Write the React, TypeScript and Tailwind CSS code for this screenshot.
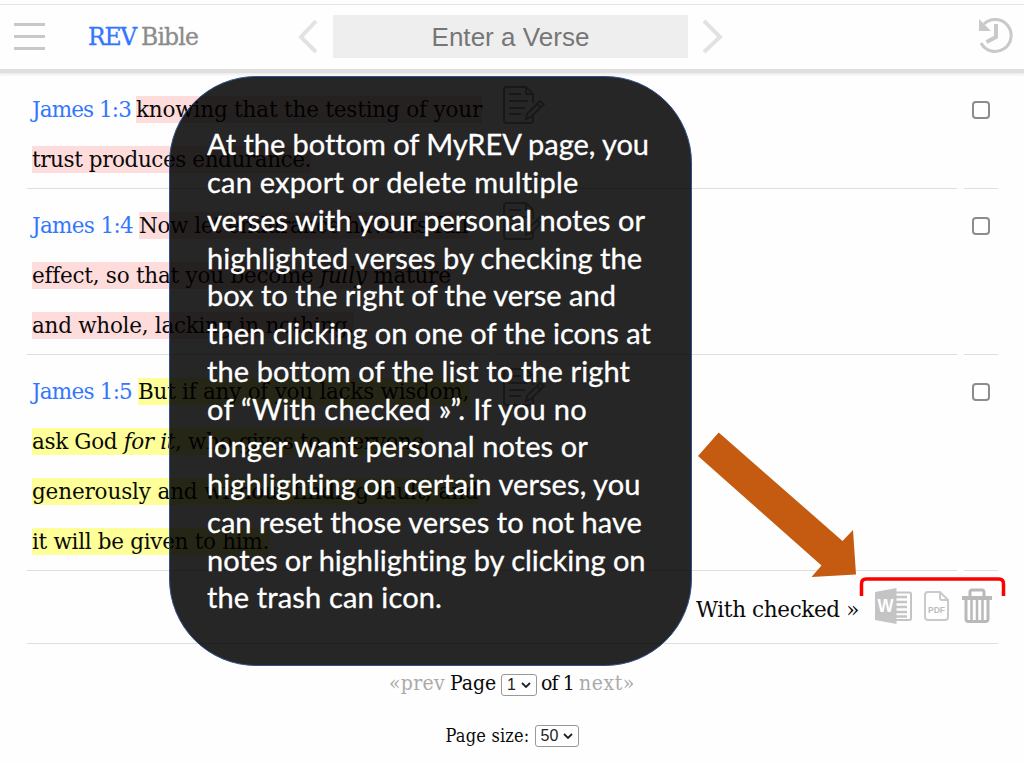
import { useLayoutEffect, useRef, type ReactNode } from "react";

/** Inline text whose tracking is adjusted so that it fills the given width. */
function Fit({ w, className = "", children }: { w: number; className?: string; children: ReactNode }) {
  const ref = useRef<HTMLSpanElement>(null);
  useLayoutEffect(() => {
    const el = ref.current;
    if (!el) return;
    el.style.letterSpacing = "0px";
    const natural = el.getBoundingClientRect().width;
    const count = (el.textContent || "").length;
    el.style.letterSpacing = `${(w - natural) / count}px`;
  }, [w]);
  return (
    <span ref={ref} className={`inline-block whitespace-pre ${className}`}>
      {children}
    </span>
  );
}

const pink = "bg-[#ffdcdc]";
const yellow = "bg-[#ffff99]";

type Line = { w: number; text: ReactNode };
type Verse = { reference: string; refWidth: number; gap: string; height: string; color: string; lines: Line[] };

const verses: Verse[] = [
  {
    reference: "James 1:3",
    refWidth: 99,
    gap: "w-[5px]",
    height: "h-[116px]",
    color: pink,
    lines: [
      { w: 346, text: "knowing that the testing of your" },
      { w: 279, text: "trust produces endurance." },
    ],
  },
  {
    reference: "James 1:4",
    refWidth: 101,
    gap: "w-[6px]",
    height: "h-[166px]",
    color: pink,
    lines: [
      { w: 329, text: "Now let endurance have its full" },
      { w: 418, text: <>effect, so that you become <i>fully</i> mature</> },
      { w: 322, text: "and whole, lacking in nothing." },
    ],
  },
  {
    reference: "James 1:5",
    refWidth: 100,
    gap: "w-[6px]",
    height: "h-[216px]",
    color: yellow,
    lines: [
      { w: 331, text: "But if any of you lacks wisdom," },
      { w: 392, text: <>ask God <i>for it</i>, who gives to everyone</> },
      { w: 446, text: "generously and without finding fault, and" },
      { w: 237, text: "it will be given to him." },
    ],
  },
];

const callout: [string, number][] = [
  ["At the bottom of MyREV page, you", 441],
  ["can export or delete multiple", 372],
  ["verses with your personal notes or", 438],
  ["highlighted verses by checking the", 435],
  ["box to the right of the verse and", 409],
  ["then clicking on one of the icons at", 444],
  ["the bottom of the list to the right", 422],
  ["of “With checked »”. If you no", 380],
  ["longer want personal notes or", 381],
  ["highlighting on certain verses, you", 434],
  ["can reset those verses to not have", 435],
  ["notes or highlighting by clicking on", 439],
  ["the trash can icon.", 235],
];

function NoteIcon() {
  return (
    <svg className="mt-3 ml-2 h-10 w-[44px]" viewBox="0 0 44 40" fill="none" stroke="#a0a0a0" strokeWidth="2">
      <path d="M30 29V35Q30 38 27 38H4Q1 38 1 35V5Q1 2 4 2H23L30 9V18M23 2V9H30M6 9H18M6 16H25M6 23H22M6 29H18" />
      <path d="M24 29L37 16L41 19L28 32L23 34ZM34 19L38 23" />
    </svg>
  );
}

function HistoryIcon() {
  return (
    <svg className="h-9 w-9 overflow-visible" viewBox="0 0 36 36" fill="none" stroke="#c9c9c9">
      <path d="M6 11A16 16 0 1 1 3 30" strokeWidth="3" />
      <path d="M1 6V18H13Z" fill="#c9c9c9" stroke="none" />
      <path d="M18 11V24L8.500 29" strokeWidth="4" />
    </svg>
  );
}

function WordIcon() {
  return (
    <svg className="h-9 w-[38px]" viewBox="0 0 38 36">
      <path d="M20 4.500H34.500Q36 4.500 36 6V30.500Q36 32 34.500 32H20" fill="none" stroke="#c4c4c4" strokeWidth="2" />
      <path d="M21 9H32M21 14H32M21 19H32M21 24H32M21 28.500H32" stroke="#c4c4c4" strokeWidth="2.500" />
      <path d="M0 4L21.500 0V36L0 32Z" fill="#c4c4c4" />
      <text x="10.500" y="24" textAnchor="middle" fontFamily="Liberation Sans, sans-serif" fontWeight="700" fontSize="18" fill="#fff" textLength="16" lengthAdjust="spacingAndGlyphs">W</text>
    </svg>
  );
}

function PdfIcon() {
  return (
    <svg className="h-[30px] w-[25px]" viewBox="0 0 25 30" fill="none" stroke="#cacaca" strokeWidth="2">
      <path d="M16 1H4Q1 1 1 4V26Q1 29 4 29H21Q24 29 24 26V9L16 1V7Q16 9 18 9H24" />
      <text x="12.500" y="22" textAnchor="middle" stroke="none" fill="#bdbdbd" fontFamily="Liberation Sans, sans-serif" fontWeight="700" fontSize="8.500">PDF</text>
    </svg>
  );
}

function TrashIcon() {
  return (
    <svg className="h-[36px] w-[30px]" viewBox="0 0 30 36" fill="none" stroke="#b9b9b9">
      <path d="M8 9V4Q8 2 10 2H20Q22 2 22 4V9" strokeWidth="3" />
      <path d="M0 10H30" strokeWidth="4" />
      <path d="M4 11V31Q4 33.500 6.500 33.500H23.500Q26 33.500 26 31V11" strokeWidth="3" />
      <path d="M9.500 12V33M15 12V33M20.500 12V33" strokeWidth="2.500" />
    </svg>
  );
}

function Select({ value, className }: { value: string; className: string }) {
  return (
    <span className={`flex h-[22px] items-center justify-between rounded-[3px] border border-[#999] bg-white pr-[5px] pl-[5px] font-['Liberation_Sans',sans-serif] text-[16px] leading-none text-[#222] ${className}`}>
      {value}
      <svg className="h-[6px] w-[10px]" viewBox="0 0 10 6" fill="none" stroke="#222" strokeWidth="1.800">
        <path d="M1 1L5 5L9 1" />
      </svg>
    </span>
  );
}

export default function App() {
  return (
    <div className="relative h-[764px] w-[1024px] overflow-hidden bg-[#fefefe] font-['DejaVu_Serif',serif] text-[21.500px] text-[#0a0a0a]">
      <header className="mt-1 flex h-[69px] items-start border-t border-[#e4e4e4] border-b-[4px] border-b-[#dfdfdf] pl-[14px] shadow-[0_2px_2px_#eeeeee]">
        <div className="mt-[18px] flex w-[31px] flex-col gap-[9px]">
          <div className="h-[3px] bg-[#c8c8c8]" />
          <div className="h-[3px] bg-[#c8c8c8]" />
          <div className="h-[3px] bg-[#c8c8c8]" />
        </div>
        <div className="mt-[16px] ml-[43px] flex w-[111px] gap-[5px] text-[23.500px] leading-8">
          <Fit w={48} className="text-[#3377ff] [-webkit-text-stroke:0.3px_#3377ff]">REV</Fit>
          <Fit w={57} className="text-[#8c8c8c] [-webkit-text-stroke:0.3px_#8c8c8c]">Bible</Fit>
        </div>
        <svg className="mt-[14px] ml-[99px] h-9 w-5" viewBox="0 0 20 36" fill="none" stroke="#e2e2e2" strokeWidth="4">
          <path d="M18 2L3 18L18 33" />
        </svg>
        <div className="mt-[10px] ml-[15px] flex h-[43px] w-[355px] items-center justify-center bg-[#eeeeee] pt-px font-['Liberation_Sans',sans-serif] text-[26px] text-[#767676]">
          <Fit w={158}>Enter a Verse</Fit>
        </div>
        <svg className="mt-[14px] ml-[15px] h-9 w-5" viewBox="0 0 20 36" fill="none" stroke="#e2e2e2" strokeWidth="4">
          <path d="M1 2L17 18L1 33" />
        </svg>
        <div className="mt-[8px] ml-[255px]">
          <HistoryIcon />
        </div>
      </header>

      <main className="ml-[27px] w-[971px]">
        {verses.map((v, i) => (
          <section key={v.reference} className={`grid grid-cols-[460px_462px_34px] gap-x-[7.5px] ${v.height}`}>
            <div className="border-b border-[#dedede] pt-[12px] pl-[5px]">
              {v.lines.map((line, n) => (
                <div key={n} className="flex h-[49.8px] items-center leading-[27px]">
                  {n === 0 && (
                    <>
                      <Fit w={v.refWidth} className="text-[#3377ff]">{v.reference}</Fit>
                      <span className={v.gap} />
                    </>
                  )}
                  <Fit w={line.w} className={v.color}>{line.text}</Fit>
                </div>
              ))}
            </div>
            <div className="border-b border-[#dedede]">
              <NoteIcon />
            </div>
            <div className="border-b border-[#dedede] pt-[28px] pl-[8px]">
              <div className="h-[18px] w-[18px] rounded-[4px] border-2 border-[#8c8c8c] bg-white" aria-label={`Select verse ${i + 1}`} />
            </div>
          </section>
        ))}
        <div className="flex h-[73px] items-start border-b border-[#dedede] pl-[669px]">
          <Fit w={163} className="mt-[23px] leading-8">With checked »</Fit>
          <div className="ml-[16px] flex items-center pt-[17px]">
            <WordIcon />
            <span className="ml-[11px]"><PdfIcon /></span>
            <span className="ml-[13px]"><TrashIcon /></span>
          </div>
        </div>
      </main>

      <footer className="flex w-[1024px] flex-col items-center pt-[24px] font-['DejaVu_Serif_Condensed','DejaVu_Serif',serif] [font-stretch:condensed]">
        <div className="flex h-8 items-center text-[21px]">
          <Fit w={56} className="text-[#aaaaaa]">«prev</Fit>
          <Fit w={46} className="ml-[5px]">Page</Fit>
          <Select value="1" className="relative top-px mr-[4px] ml-[5px] w-[36px]" />
          <Fit w={33}>of 1</Fit>
          <Fit w={56} className="ml-[5px] text-[#aaaaaa]">next»</Fit>
        </div>
        <div className="mt-[19px] flex h-8 items-center text-[18px]">
          <Fit w={84}>Page size:</Fit>
          <Select value="50" className="relative top-px ml-[5px] w-[44px]" />
        </div>
      </footer>

      <aside className="absolute top-[76px] left-[169px] h-[590px] w-[523px] rounded-[87px] border border-[#2f528f] bg-black/85 pt-[48px] pl-[37px] font-['Lato',sans-serif] text-[29px] text-white [-webkit-text-stroke:0.300px_white]">
        {callout.map(([text, w]) => (
          <div key={text} className="flex h-[37.750px] items-center leading-[37px]">
            <Fit w={w}>{text}</Fit>
          </div>
        ))}
      </aside>

      <svg className="absolute top-[430px] left-[690px] h-[170px] w-[320px]" viewBox="690 430 320 170">
        <path d="M718.700 432.500L842.500 541L853 530L856 574.500L811.500 577L821.500 565.500L698 456Z" fill="#c55a11" />
        <path d="M861.500 596V584Q861.500 579 866 579H999Q1003.500 579 1003.500 584V596" fill="none" stroke="#ff0000" strokeWidth="3.500" />
      </svg>
    </div>
  );
}
